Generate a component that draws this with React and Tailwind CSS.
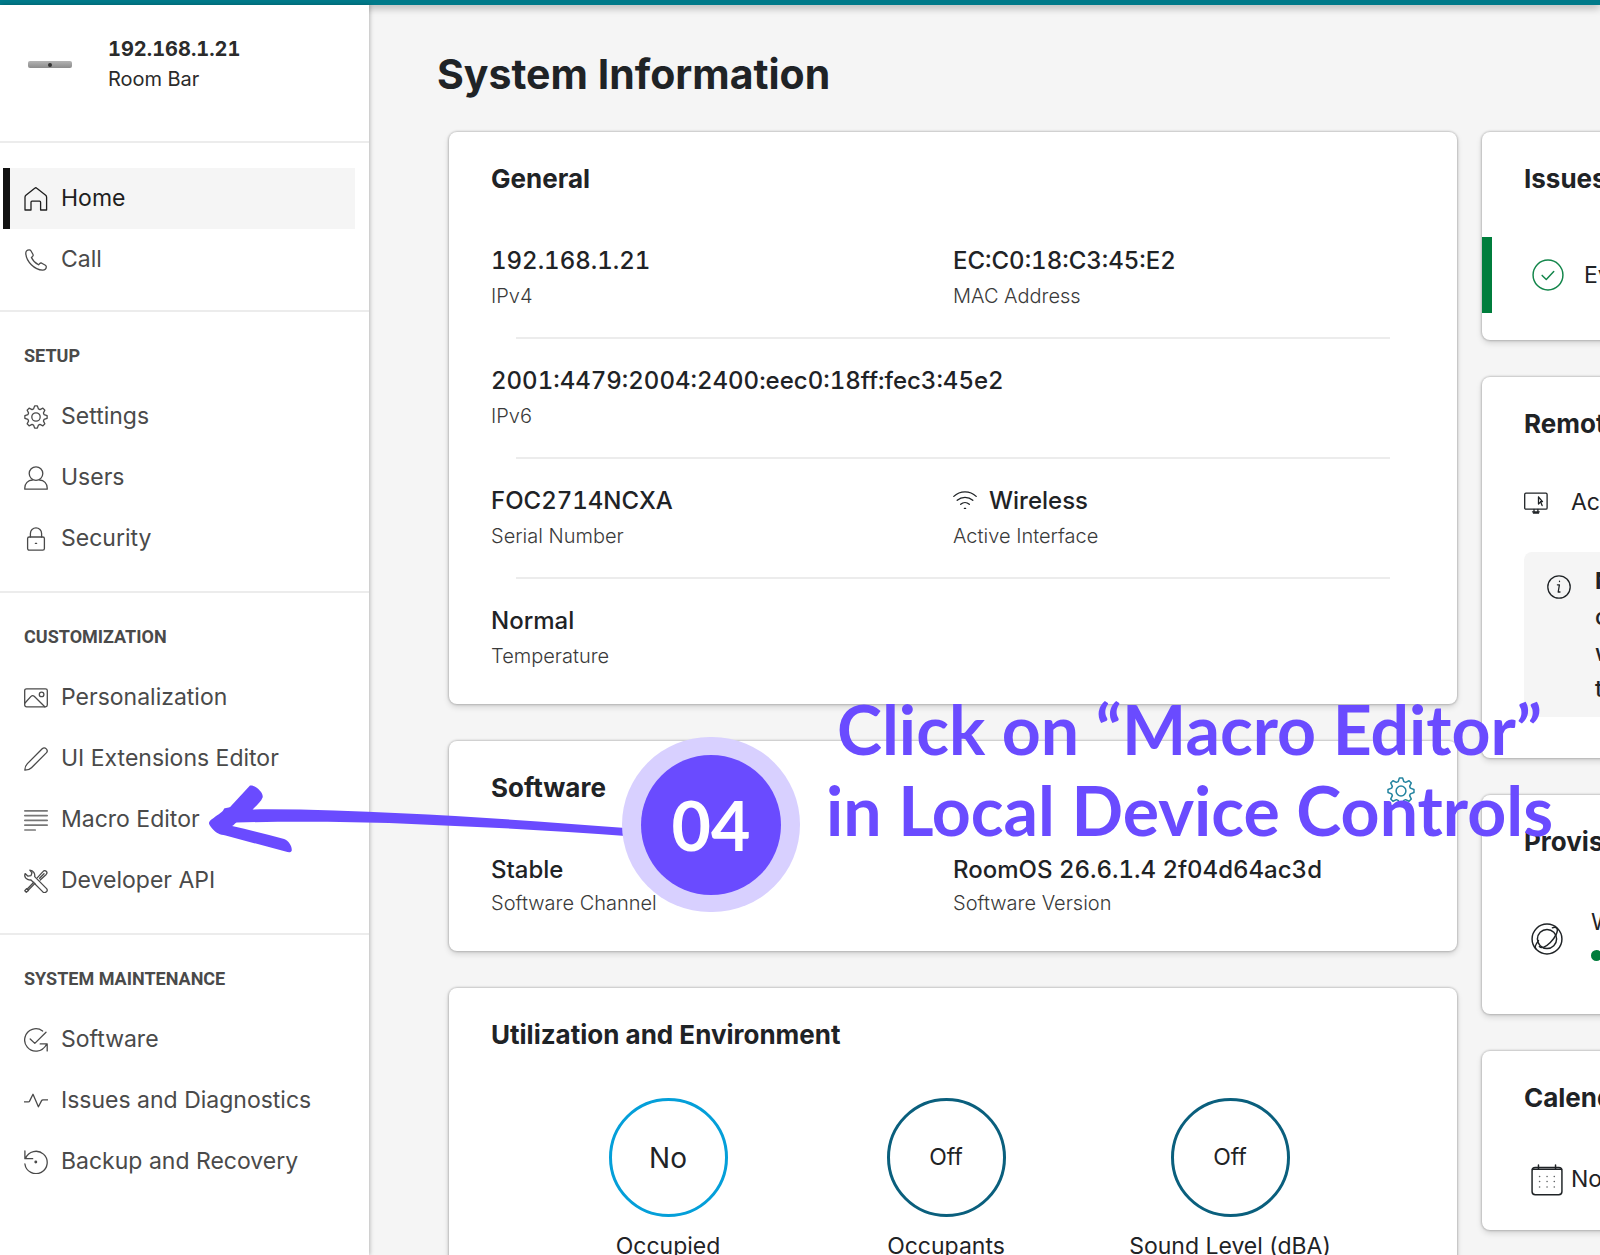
import React from "react";

const gearPath = (() => {
  const points = [];
  for (let i = 0; i < 8; i++) {
    const base = i * 45;
    [
      [-17, 8.4],
      [-7, 11.2],
      [7, 11.2],
      [17, 8.4],
    ].forEach(([deg, r]) => {
      const a = ((base + deg) * Math.PI) / 180;
      points.push(
        `${(12 + r * Math.cos(a)).toFixed(2)} ${(12 + r * Math.sin(a)).toFixed(2)}`
      );
    });
  }
  return `M${points.join("L")}Z`;
})();

function Icon({ className = "size-6", strokeWidth = 1.3, children }) {
  return (
    <svg
      viewBox="0 0 24 24"
      className={`shrink-0 ${className}`}
      fill="none"
      stroke="currentColor"
      strokeWidth={strokeWidth}
      strokeLinecap="round"
      strokeLinejoin="round"
      aria-hidden="true"
    >
      {children}
    </svg>
  );
}

const icons = {
  home: (
    <path d="M1 23V10.3c0-.8.3-1.5.9-2L10.7 1.2a1.6 1.6 0 0 1 2.1 0l8.9 7.1c.6.5.9 1.2.9 2V23h-6v-7.8a1 1 0 0 0-1-1H8a1 1 0 0 0-1 1V23Z" />
  ),
  call: (
    <path d="M5.2 1.8C3 1.8 1.6 3.4 1.8 5.6c.6 8 8.6 16.2 16.8 16.6 2.2.1 3.7-1.4 3.7-3.4 0-.8-.3-1.2-.9-1.6l-3.6-2c-.8-.4-1.6-.2-2.2.4l-1 1.2c-3-1.6-5.8-4.4-7.2-7.4l1.2-1c.6-.6.7-1.4.3-2.1l-2-3.6c-.4-.7-.9-.9-1.7-.9Z" />
  ),
  settings: (
    <>
      <path d={gearPath} />
      <circle cx="12" cy="12" r="4.2" />
    </>
  ),
  users: (
    <>
      <circle cx="12" cy="7.6" r="6.8" />
      <path d="M8.4 14C4 14.2.8 17.6.8 22v1.2h22.4V22c0-4.4-3.2-7.8-7.6-8" />
    </>
  ),
  security: (
    <>
      <rect x="3.6" y="10" width="16.8" height="13.2" rx="1.6" />
      <path d="M6.4 10V6.4a5.6 5.6 0 0 1 11.2 0V10M11.4 16.4h1.2" />
    </>
  ),
  personalization: (
    <>
      <rect x=".7" y="2.8" width="22.6" height="18" rx="1.8" />
      <circle cx="17.6" cy="8.4" r="2.3" />
      <path d="m1 17 6-6.6c1-1 2.2-1 3.2-.1l10.6 10.4" />
    </>
  ),
  pencil: (
    <path d="M.9 23.2c-.1-2.6.7-4.8 2.5-6.6L18.2 1.8a2.9 2.9 0 0 1 4.1 4.1L7.5 20.7c-1.8 1.8-4 2.5-6.6 2.5Z" />
  ),
  macro: (
    <path
      d="M.8 2.8h22.4M.8 7.6h22.4M.8 12.4h22.4M.8 17.2h22.4M.8 22h10.4"
      opacity=".75"
      strokeWidth="1.7"
    />
  ),
  developer: (
    <>
      <path d="M7 11 18.6 22.6a2.5 2.5 0 0 0 4-3L10.7 7.6c.5-3-1.3-6.2-4.9-6.5L8 3.8 7 6.6l-3 .6-2.9-2.6C.3 6.9 1.4 9.3 3.6 10.3c1 .5 2.2.8 3.4.7Z" />
      <path d="m13.4 8.6 5.8-6.2c.8-.9 2.2-.9 3-.1.9.9.9 2.2 0 3.1l-6 5.6M15.6 9.2 20 4.7M9.8 13.2l-6.8 7M11 14.4l-6.8 6.8M2.6 19.6l1.9 1.9-2.2 1.7-1.5-1.5Z" />
    </>
  ),
  software: (
    <path d="M18.6 3A11.2 11.2 0 1 0 13 23.1c4.4-.5 7.6-3.1 9.6-6.9M16.2 15.9h7v7M6.2 11l4.6 4.4L22 4.2" />
  ),
  issues: (
    <path d="M.5 12.8h3.8c.7 0 1.1-.2 1.4-.9L9 5.3l5.4 12.5 3.2-6.2c.3-.6.7-.8 1.3-.8h4.6" />
  ),
  backup: (
    <>
      <path d="M.9.9v7.8h7.8M1.6 8.3A11.2 11.2 0 1 1 .9 14" />
      <circle cx="11.8" cy="12" r=".8" fill="currentColor" />
    </>
  ),
};

const firstLinks = [
  { name: "Home", icon: "home", active: true },
  { name: "Call", icon: "call" },
];

const sections = [
  {
    title: "SETUP",
    links: [
      { name: "Settings", icon: "settings" },
      { name: "Users", icon: "users" },
      { name: "Security", icon: "security" },
    ],
  },
  {
    title: "CUSTOMIZATION",
    links: [
      { name: "Personalization", icon: "personalization" },
      { name: "UI Extensions Editor", icon: "pencil" },
      { name: "Macro Editor", icon: "macro" },
      { name: "Developer API", icon: "developer" },
    ],
  },
  {
    title: "SYSTEM MAINTENANCE",
    links: [
      { name: "Software", icon: "software" },
      { name: "Issues and Diagnostics", icon: "issues" },
      { name: "Backup and Recovery", icon: "backup" },
    ],
  },
];

function NavItem({ name, icon, active }) {
  return (
    <a
      href="#"
      className={`ml-[3px] mr-[14px] flex h-[61px] items-center gap-[13px] border-l-[7px] pl-[14px] text-[23px] ${
        active
          ? "border-[#121212] bg-[#f5f5f5] text-[#1f1f1f]"
          : "border-transparent text-[#4a4a4a]"
      }`}
    >
      <Icon>{icons[icon]}</Icon>
      <span>{name}</span>
    </a>
  );
}

function Sidebar() {
  return (
    <aside className="z-10 w-[369px] shrink-0 bg-white shadow-[1px_0_4px_rgba(0,0,0,0.25)]">
      <div className="flex h-[138px] items-start border-b-2 border-[#ececec] pl-7 pt-[29px]">
        {/* device thumbnail */}
        <div className="mt-[27px] flex h-[7px] w-11 items-center justify-center rounded-[2px] bg-linear-to-b from-[#b4b4b4] to-[#8c8c8c]">
          <span className="size-1 rounded-full bg-[#333333]" />
        </div>
        <div className="ml-9 text-xl leading-[30px] text-[#2b2b2b] tabular-nums">
          <div className="font-bold">192.168.1.21</div>
          <div>Room Bar</div>
        </div>
      </div>
      <nav>
        <div className="border-b-2 border-[#ececec] pb-5 pt-[25px]">
          {firstLinks.map((link) => (
            <NavItem key={link.name} {...link} />
          ))}
        </div>
        {sections.map((section) => (
          <div
            key={section.title}
            className="border-b-2 border-[#ececec] pb-[22px] pt-[13px] last:border-b-0"
          >
            <h2 className="flex h-[61px] items-center pl-6 font-['Roboto',sans-serif] text-lg font-bold text-[#4a4a4a]">
              {section.title}
            </h2>
            {section.links.map((link) => (
              <NavItem key={link.name} {...link} />
            ))}
          </div>
        ))}
      </nav>
    </aside>
  );
}

function Card({ title, action, className = "", children }) {
  return (
    <section
      className={`flex flex-col rounded-lg bg-white pt-[30px] shadow-[0_0_2px_1px_rgba(0,0,0,0.18),0_3px_6px_rgba(0,0,0,0.14)] ${className}`}
    >
      <div className="mb-[23px] flex items-end justify-between px-[42px]">
        <h2 className="whitespace-nowrap text-[26px] leading-[34px] font-bold">
          {title}
        </h2>
        {action}
      </div>
      {children}
    </section>
  );
}

function Field({ value, label, icon, compact, className = "" }) {
  return (
    <div className={className}>
      <div className="flex items-center gap-3 text-2xl leading-[34px] font-medium tabular-nums">
        {icon}
        {value}
      </div>
      <div
        className={`text-xl font-light text-[#3a3a3a] ${
          compact ? "leading-8" : "leading-9"
        }`}
      >
        {label}
      </div>
    </div>
  );
}

function FieldRow({ fields, last, compact }) {
  return (
    <>
      <div className={`flex px-[42px] pt-[25px] ${last ? "" : "pb-[23px]"}`}>
        {fields.map((field, i) => (
          <Field
            key={field.label}
            {...field}
            compact={compact}
            className={i === 0 && fields.length > 1 ? "w-1/2" : ""}
          />
        ))}
      </div>
      {!last && <hr className="mx-[67px] border-t-2 border-[#ececec]" />}
    </>
  );
}

const wifiIcon = (
  <Icon>
    <path d="M.8 7.4C7 1.4 17 1.4 23.2 7.4M4.2 11.3c4.5-4 11.1-4 15.6 0M7.7 15.2c2.5-2.2 6.1-2.2 8.6 0" />
    <path d="M11.4 19.4h1.2" />
  </Icon>
);

const generalRows = [
  [
    { value: "192.168.1.21", label: "IPv4" },
    { value: "EC:C0:18:C3:45:E2", label: "MAC Address" },
  ],
  [{ value: "2001:4479:2004:2400:eec0:18ff:fec3:45e2", label: "IPv6" }],
  [
    { value: "FOC2714NCXA", label: "Serial Number" },
    { value: "Wireless", label: "Active Interface", icon: wifiIcon },
  ],
  [{ value: "Normal", label: "Temperature" }],
];

const softwareRow = [
  { value: "Stable", label: "Software Channel" },
  { value: "RoomOS 26.6.1.4 2f04d64ac3d", label: "Software Version" },
];

function Gauge({ value, label, className }) {
  return (
    <div className="flex flex-col items-center gap-3">
      <div
        className={`flex size-[119px] items-center justify-center rounded-full border-3 ${className}`}
      >
        {value}
      </div>
      <div className="whitespace-nowrap text-[23px] leading-[34px]">
        {label}
      </div>
    </div>
  );
}

function LeftColumn() {
  return (
    <div className="flex w-[63vw] shrink-0 flex-col gap-[37px]">
      <Card title="General" className="pb-[30px]">
        {generalRows.map((fields, i) => (
          <FieldRow
            key={fields[0].label}
            fields={fields}
            last={i === generalRows.length - 1}
          />
        ))}
      </Card>
      <Card
        title="Software"
        className="pb-[32px]"
        action={
          <button aria-label="Software settings" className="text-[#2484a0]">
            <Icon className="size-7">{icons.settings}</Icon>
          </button>
        }
      >
        <FieldRow fields={softwareRow} last compact />
      </Card>
      <Card title="Utilization and Environment" className="pb-10">
        <div className="grid grid-cols-[278px_278px_290px] pl-20 pt-[23px]">
          <Gauge
            value="No"
            label="Occupied"
            className="border-[#049fd9] text-[28px]"
          />
          <Gauge
            value="Off"
            label="Occupants"
            className="border-[#0a5f7d] text-[23px]"
          />
          <Gauge
            value="Off"
            label="Sound Level (dBA)"
            className="border-[#0a5f7d] text-[23px]"
          />
        </div>
      </Card>
    </div>
  );
}

function RightColumn() {
  return (
    <div className="flex w-[36vw] shrink-0 flex-col gap-[37px] whitespace-nowrap text-[23px]">
      <Card title="Issues" className="pb-[27px]">
        <div className="mt-[18px] flex h-[76px] items-center gap-5 border-l-10 border-[#007d3c] pl-10">
          <Icon className="size-8 text-[#12854a]" strokeWidth={1.1}>
            <circle cx="12" cy="12" r="11.2" />
            <path d="m7.6 12.3 3.1 3.1 5.6-6" />
          </Icon>
          <span>Everything is OK</span>
        </div>
      </Card>
      <Card title="Remote Access" className="pb-[41px]">
        <div className="flex h-[60px] items-center gap-[23px] px-[42px] pt-4">
          <Icon>
            <rect x=".7" y="3.2" width="22.4" height="16" rx="1.2" />
            <path d="M8.5 21.8h6.8M9.5 23.2h5M10 19.4v2.2M13.9 19.4v2.2M14.5 7v7l1.6-1.6M14.5 7l4 4.6h-2l1.6 4" />
          </Icon>
          <span>Access allowed</span>
        </div>
        <div className="mx-[42px] mt-7 flex h-[165px] gap-6 rounded-lg bg-[#f5f5f5] pl-[23px] pt-[11px]">
          <Icon className="mt-3 size-6">
            <circle cx="12" cy="12" r="11.2" />
            <path d="M10.4 9.8h2L11.2 17H13M12.5 6.2v.3" />
          </Icon>
          <p className="leading-9 font-medium">
            <b>Note</b>
            <br />
            only when
            <br />
            working in
            <br />
            the room
          </p>
        </div>
      </Card>
      <Card title="Provisioning" className="pb-[30px]">
        <div className="mt-[11px] flex h-[91px] items-center gap-7 pl-[49px]">
          <Icon className="size-8" strokeWidth={1.1}>
            <circle cx="12" cy="12" r="11.2" />
            <circle cx="12" cy="12" r="7.2" />
            <path d="M3.6 19.2c-1.2-1.2.3-3.7 2-6M19.3 3.8c1.5 2-1 7-4.8 10.8-3.6 3.6-6.7 4.6-8.2 3M19.3 3.8c-.8-.8-2-.8-3.3-.2" />
          </Icon>
          <div className="leading-[34px]">
            <div>Webex</div>
            <div className="flex items-center gap-2">
              <span className="size-[11px] rounded-full bg-[#007d3c]" />
              Registered
            </div>
          </div>
        </div>
      </Card>
      <Card title="Calendar" className="pb-[34px]">
        <div className="flex h-[58px] items-end gap-2 pl-[49px]">
          <Icon className="size-8" strokeWidth={1.1}>
            <rect x=".8" y="2.6" width="22.4" height="20.4" rx="2.4" />
            <path d="M1 4h22M5.6.8V4M18.4.8V4" />
            <path
              d="M6.4 9.4h.1M12 9.4h.1M17.4 9.4h.1M6.4 13.2h.1M12 13.2h.1M17.4 13.2h.1M6.4 17.2h.1M12 17.2h.1M17.4 17.2h.1"
              opacity=".7"
            />
          </Icon>
          <span className="leading-[34px]">No meetings</span>
        </div>
      </Card>
    </div>
  );
}

// step marker, arrow and caption drawn over the page
function Callout() {
  return (
    <div className="pointer-events-none absolute left-[209px] top-[688px] z-20 font-['Lato',sans-serif] text-[68px] leading-[81px] font-bold text-[#6a4bff]">
      <svg
        viewBox="209 780 420 80"
        width="420"
        height="80"
        className="absolute left-0 top-[92px]"
        fill="currentColor"
        aria-hidden="true"
      >
        <path d="M250 785.5c5-1 14 7 12.6 12-1.5 4-6 8-10 11.9 50-.4 100 1.4 148 3.9 75 3.5 150 9 229 14.9v8c-79-6-154-9.5-229-12.7-50-1.9-110-2.3-164-1-2 1-2.5 2.5-4.5 3.6 18 4.2 35 8.4 52 13 5 2 8.5 8 7.5 12-1 1.6-3 1.5-6 .5l-60-16.1c-6-1-9-2-13-6.5-5-5.5-5-7 1-11 5-4 9.5-6 10.500-9.500 3-.6 4-.7 6-1.500Z" />
      </svg>
      <div className="absolute left-[413px] top-[49px] flex h-[175px] w-[178px] items-center justify-center rounded-full bg-[#d8d0ff]">
        <div className="flex size-[140px] items-center justify-center rounded-full bg-[#6a4bff] text-white">
          04
        </div>
      </div>
      <p className="ml-[617px] whitespace-nowrap text-center">
        Click on “Macro Editor”
        <br />
        in Local Device Controls
      </p>
    </div>
  );
}

function App() {
  return (
    <div className="relative flex h-screen flex-col overflow-hidden bg-[#f5f5f5] font-['Inter',sans-serif] text-[#1f2326]">
      <header className="z-10 h-[5px] shrink-0 bg-[#007a8a] shadow-[0_2px_8px_rgba(0,0,0,0.4)]" />
      <div className="flex min-h-0 flex-1">
        <Sidebar />
        <main className="min-w-0 flex-1 overflow-hidden">
          <h1 className="pb-8 pl-[68px] pt-[43px] text-[41px] leading-[52px] font-bold">
            System Information
          </h1>
          <div className="flex gap-[25px] pl-20">
            <LeftColumn />
            <RightColumn />
          </div>
        </main>
      </div>
      <Callout />
    </div>
  );
}

export default App;
